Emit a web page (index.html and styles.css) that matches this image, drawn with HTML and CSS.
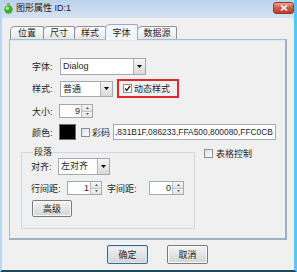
FILE: index.html
```html
<!DOCTYPE html>
<html lang="zh-CN">
<head>
    <meta charset="UTF-8">
    <title>图形属性 ID:1</title>
    <link rel="stylesheet" href="styles.css">
</head>
<body>
    <div class="window">
        <div class="titlebar">
            <svg class="app-icon" width="9" height="11" viewBox="0 0 9 11">
                <rect x="3" y="0" width="3" height="2" fill="#9a9a9a"/>
                <circle cx="4.5" cy="6.5" r="4.2" fill="#3fae2a"/>
                <circle cx="3.4" cy="5.2" r="1.6" fill="#c8f07a"/>
            </svg>
            <span class="title">图形属性 ID:1</span>
            <span class="close-btn">
                <svg width="8" height="6" viewBox="0 0 8 6">
                    <path d="M1 0.5 L7 5.5 M7 0.5 L1 5.5" stroke="#fff" stroke-width="1.6"/>
                </svg>
            </span>
        </div>

        <div class="content">
            <div class="tabs">
                <div class="tab tab-1">位置</div>
                <div class="tab tab-2">尺寸</div>
                <div class="tab tab-3">样式</div>
                <div class="tab tab-4 tab-active">字体</div>
                <div class="tab tab-5">数据源</div>
            </div>

            <div class="panel">
                <div class="rows">
                    <div class="row row-font">
                        <span class="label">字体:</span>
                        <div class="combo combo-font">
                            <span class="combo-text">Dialog</span>
                            <span class="combo-arrow"><svg width="5" height="3" viewBox="0 0 5 3"><polygon points="0,0 5,0 2.5,3" fill="#000"/></svg></span>
                        </div>
                    </div>

                    <div class="row row-style">
                        <span class="label">样式:</span>
                        <div class="combo combo-style">
                            <span class="combo-text">普通</span>
                            <span class="combo-arrow"><svg width="5" height="3" viewBox="0 0 5 3"><polygon points="0,0 5,0 2.5,3" fill="#000"/></svg></span>
                        </div>
                        <div class="highlight">
                            <span class="check check-on">
                                <svg width="7" height="7" viewBox="0 0 7 7"><path d="M1 3.5 L2.8 5.5 L6 1" stroke="#222" stroke-width="1.3" fill="none"/></svg>
                            </span>
                            <span>动态样式</span>
                        </div>
                    </div>

                    <div class="row row-size">
                        <span class="label">大小:</span>
                        <div class="spinner spinner-size">
                            <span class="spinner-value">9</span>
                            <span class="spinner-btns">
                                <span class="spin-up"><svg width="3" height="2" viewBox="0 0 3 2"><polygon points="0,2 3,2 1.5,0" fill="#555"/></svg></span>
                                <span class="spin-down"><svg width="3" height="2" viewBox="0 0 3 2"><polygon points="0,0 3,0 1.5,2" fill="#555"/></svg></span>
                            </span>
                        </div>
                    </div>

                    <div class="row row-color">
                        <span class="label">颜色:</span>
                        <span class="swatch"></span>
                        <span class="check check-gap"></span>
                        <span class="check-label">彩码</span>
                        <div class="textfield">,831B1F,086233,FFA500,800080,FFC0CB</div>
                    </div>
                </div>

                <div class="lower">
                    <fieldset class="group">
                        <legend>段落</legend>
                        <div class="row row-align">
                            <span class="label">对齐:</span>
                            <div class="combo combo-align">
                                <span class="combo-text">左对齐</span>
                                <span class="combo-arrow"><svg width="5" height="3" viewBox="0 0 5 3"><polygon points="0,0 5,0 2.5,3" fill="#000"/></svg></span>
                            </div>
                        </div>
                        <div class="row row-spacing">
                            <span class="label label-line">行间距:</span>
                            <div class="spinner spinner-small">
                                <span class="spinner-value">1</span>
                                <span class="spinner-btns">
                                    <span class="spin-up"><svg width="3" height="2" viewBox="0 0 3 2"><polygon points="0,2 3,2 1.5,0" fill="#555"/></svg></span>
                                    <span class="spin-down"><svg width="3" height="2" viewBox="0 0 3 2"><polygon points="0,0 3,0 1.5,2" fill="#555"/></svg></span>
                                </span>
                            </div>
                            <span class="label label-char">字间距:</span>
                            <div class="spinner spinner-small">
                                <span class="spinner-value">0</span>
                                <span class="spinner-btns">
                                    <span class="spin-up"><svg width="3" height="2" viewBox="0 0 3 2"><polygon points="0,2 3,2 1.5,0" fill="#555"/></svg></span>
                                    <span class="spin-down"><svg width="3" height="2" viewBox="0 0 3 2"><polygon points="0,0 3,0 1.5,2" fill="#555"/></svg></span>
                                </span>
                            </div>
                        </div>
                        <button class="btn btn-advanced">高级</button>
                    </fieldset>

                    <div class="table-ctrl">
                        <span class="check"></span>
                        <span>表格控制</span>
                    </div>
                </div>
            </div>

            <div class="actions">
                <button class="btn btn-default">确定</button>
                <button class="btn">取消</button>
            </div>
        </div>
    </div>
</body>
</html>
```

FILE: styles.css
```css
* {
    box-sizing: border-box;
}

body {
    margin: 0;
    background-color: #f0f0f0;
    font-family: "Liberation Sans", "Noto Sans CJK SC", sans-serif;
    font-size: 9px;
    color: #1e1e1e;
}

.window {
    width: 297px;
    height: 272px;
    display: flex;
    flex-direction: column;
    background-color: #f0f0f0;
    border-left: 2px solid #bcd6ee;
    border-right: 3px solid #5fc3f1;
    border-bottom: 2px solid #1a4a5f;
}

/* title bar */
.titlebar {
    height: 18px;
    display: flex;
    align-items: flex-start;
    padding-left: 2px;
    background: linear-gradient(#bcd2ec, #d4e2f2);
}

.app-icon {
    margin-top: 3px;
}

.title {
    margin-left: 3px;
    margin-top: 2px;
    line-height: 13px;
    color: #1a1a1a;
}

.close-btn {
    margin-left: auto;
    margin-top: 2px;
    width: 21px;
    height: 12px;
    display: flex;
    align-items: center;
    justify-content: center;
    border: 1px solid #8e3b2c;
    border-radius: 3px;
    background: linear-gradient(#e8a896, #d0604a 45%, #bb3d27);
}

/* tabs */
.content {
    display: flex;
    flex-direction: column;
    padding: 0 7px;
}

.tabs {
    height: 21px;
    display: flex;
    align-items: flex-end;
    padding-left: 1px;
}

.tab {
    height: 13px;
    line-height: 12px;
    text-align: center;
    border: 1px solid #8d9094;
    border-bottom: none;
    border-radius: 5px 2px 0 0;
    background: linear-gradient(#ffffff, #e6e6e6);
    margin-left: -1px;
}

.tab-1 {
    width: 34px;
    margin-left: 0;
}

.tab-2,
.tab-3 {
    width: 32px;
}

.tab-4 {
    width: 33px;
}

.tab-5 {
    width: 40px;
}

.tab-active {
    position: relative;
    height: 16px;
    line-height: 16px;
    margin-bottom: -1px;
    border-color: #92acd0;
    background: #f2f5f9;
}

/* tab panel */
.panel {
    height: 201px;
    border: 1px solid #a4bcd8;
    border-right: 2px solid #9fb0c6;
    border-bottom: 2px solid #9fb0c6;
    box-shadow: inset 0 1px 0 #dce7f4;
    padding: 18px 0 0 11px;
}

.rows {
    padding-left: 11px;
}

.row {
    display: flex;
    align-items: center;
}

.label {
    width: 27px;
    flex-shrink: 0;
}

.row-font {
    height: 17px;
    margin-bottom: 4px;
}

.row-style {
    height: 19px;
    margin-bottom: 6px;
}

.row-size {
    height: 14px;
    margin-bottom: 6px;
}

.row-color {
    height: 16px;
    margin-bottom: 6px;
}

/* combo box */
.combo {
    display: flex;
    background-color: #fff;
    border: 1px solid #a3a9b1;
}

.combo-text {
    flex: 1;
    padding-left: 2px;
    line-height: 14px;
}

.combo-arrow {
    width: 12px;
    display: flex;
    align-items: center;
    justify-content: center;
    border-left: 1px solid #b3b3b3;
    background: linear-gradient(#f6f6f6, #dadada);
}

.combo-font {
    width: 86px;
    height: 17px;
    margin-left: 1px;
}

.combo-style {
    width: 53px;
    height: 16px;
    margin-left: 1px;
}

.combo-align {
    width: 52px;
    height: 17px;
}

.highlight {
    height: 19px;
    width: 62px;
    margin-left: 4px;
    display: flex;
    align-items: center;
    gap: 2px;
    padding-left: 4px;
    border: 2px solid #e2262b;
}

/* checkbox */
.check {
    width: 9px;
    height: 9px;
    flex-shrink: 0;
    display: flex;
    align-items: center;
    justify-content: center;
    border: 1px solid #8c8f94;
    background: linear-gradient(135deg, #d8dde3, #ffffff);
}

.check-on {
    background: #fff;
}

.check-gap {
    margin-left: 5px;
}

.check-label {
    margin-left: 2px;
}

/* spinner */
.spinner {
    display: flex;
    height: 14px;
    background-color: #fff;
    border: 1px solid #a3a9b1;
}

.spinner-value {
    flex: 1;
    text-align: right;
    padding-right: 1px;
    line-height: 12px;
}

.spinner-btns {
    width: 11px;
    display: flex;
    flex-direction: column;
    border-left: 1px solid #b9b9b9;
}

.spin-up,
.spin-down {
    flex: 1;
    display: flex;
    align-items: center;
    justify-content: center;
    background: linear-gradient(#f7f7f7, #e2e2e2);
}

.spin-up {
    border-bottom: 1px solid #c4c4c4;
}

.spinner-size {
    width: 34px;
}

.spinner-small {
    width: 35px;
}

.swatch {
    width: 17px;
    height: 16px;
    background-color: #000;
    border: 1px solid #6b6b6b;
}

.textfield {
    width: 163px;
    height: 16px;
    margin-left: 3px;
    padding-left: 1px;
    font-size: 8.4px;
    line-height: 14px;
    white-space: nowrap;
    overflow: hidden;
    background-color: #fff;
    border: 1px solid #a3a9b1;
}

/* paragraph group */
.lower {
    display: flex;
    align-items: flex-start;
}

.group {
    width: 174px;
    margin: 0;
    padding: 0 0 11px 9px;
    border: 1px solid #cbd9e6;
}

.group legend {
    margin-left: 2px;
    padding: 0 1px;
    line-height: 12px;
}

.row-align {
    height: 17px;
    margin-bottom: 6px;
}

.row-spacing {
    height: 14px;
    margin-bottom: 5px;
}

.label-line {
    width: 36px;
}

.label-char {
    width: 42px;
    margin-left: 5px;
}

.table-ctrl {
    margin-left: 9px;
    margin-top: 1px;
    height: 13px;
    display: flex;
    align-items: center;
    gap: 3px;
}

/* buttons */
.btn {
    font-family: inherit;
    font-size: 9px;
    color: #1e1e1e;
    padding: 0;
    border: 1px solid #7a7a7a;
    border-radius: 2px;
    background: linear-gradient(#f4f4f4, #e4e4e4 50%, #d4d4d4);
    box-shadow: inset 0 0 0 1px #fbfbfb;
}

.btn-advanced {
    width: 40px;
    height: 17px;
    margin-left: 1px;
}

.actions {
    display: flex;
    gap: 19px;
    margin-top: 5px;
    padding-left: 98px;
}

.actions .btn {
    width: 41px;
    height: 19px;
}

.btn-default {
    border-color: #3d6a8d;
    box-shadow: inset 0 0 0 1px #cfe6f7;
}
```
